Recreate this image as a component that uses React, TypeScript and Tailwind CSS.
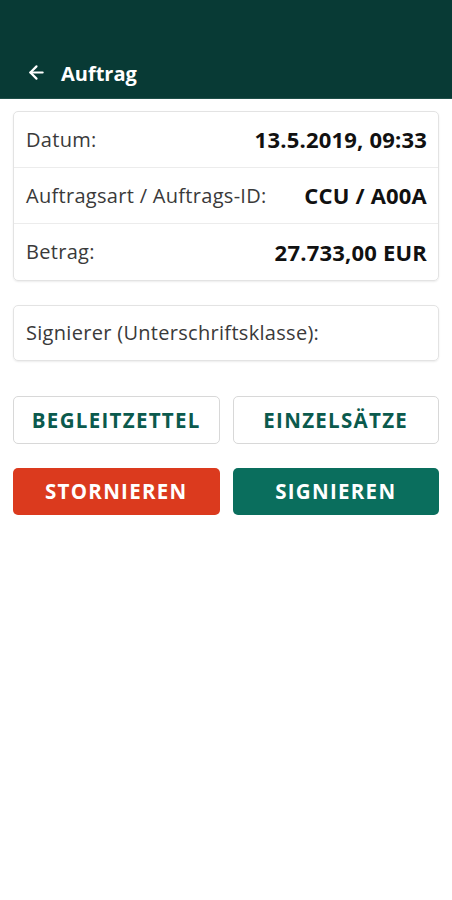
import { ArrowLeft } from "lucide-react";

const rows = [
  { label: "Datum:", value: "13.5.2019, 09:33" },
  { label: "Auftragsart / Auftrags-ID:", value: "CCU / A00A" },
  { label: "Betrag:", value: "27.733,00 EUR" },
];

export default function App() {
  return (
    <div className="min-h-[900px] w-[452px] bg-white" style={{ fontFamily: "'Open Sans', Lato, sans-serif" }}>
      {/* Header */}
      <header className="h-[99px] bg-[#083a35] flex items-end px-[26px] pb-[13px] border-b border-[#1f4f49]">
        <ArrowLeft className="w-[21px] h-[21px] text-white mb-[2px]" strokeWidth={2.5} />
        <h1 className="ml-[14px] text-[20px] font-bold text-white leading-none mb-[1px]">Auftrag</h1>
      </header>

      <div className="px-[13px] pt-[12px]">
        {/* Details */}
        <div className="rounded-[5px] border border-[#e3e3e3] shadow-[0_1px_2px_rgba(0,0,0,0.08)]">
          {rows.map((r, i) => (
            <div
              key={r.label}
              className={`h-[56px] flex items-center justify-between pl-[12px] pr-[11px] ${i < rows.length - 1 ? "border-b border-[#ececec]" : ""}`}
            >
              <span className="text-[20px] text-[#3a3a3a] tracking-[0.3px]">{r.label}</span>
              <span className="text-[22px] font-bold text-[#111] tracking-[0.2px]">{r.value}</span>
            </div>
          ))}
        </div>

        {/* Signer */}
        <div className="mt-[24px] h-[56px] rounded-[5px] border border-[#e3e3e3] shadow-[0_1px_2px_rgba(0,0,0,0.08)] flex items-center pl-[12px]">
          <span className="text-[20px] text-[#3a3a3a] tracking-[0.3px]">Signierer (Unterschriftsklasse):</span>
        </div>

        {/* Actions */}
        <div className="mt-[35px] grid grid-cols-2 gap-[13px]">
          <button className="h-[48px] rounded-[5px] border border-[#d8d8d8] bg-white text-[#0b5a4d] text-[20.5px] font-bold tracking-[1.3px]">
            BEGLEITZETTEL
          </button>
          <button className="h-[48px] rounded-[5px] border border-[#d8d8d8] bg-white text-[#0b5a4d] text-[20.5px] font-bold tracking-[1.3px]">
            EINZELSÄTZE
          </button>
        </div>
        <div className="mt-[24px] grid grid-cols-2 gap-[13px]">
          <button className="h-[47px] rounded-[5px] bg-[#db3a1e] text-white text-[20.5px] font-bold tracking-[1.3px]">
            STORNIEREN
          </button>
          <button className="h-[47px] rounded-[5px] bg-[#0a6e5d] text-white text-[20.5px] font-bold tracking-[1.3px]">
            SIGNIEREN
          </button>
        </div>
      </div>
    </div>
  );
}
